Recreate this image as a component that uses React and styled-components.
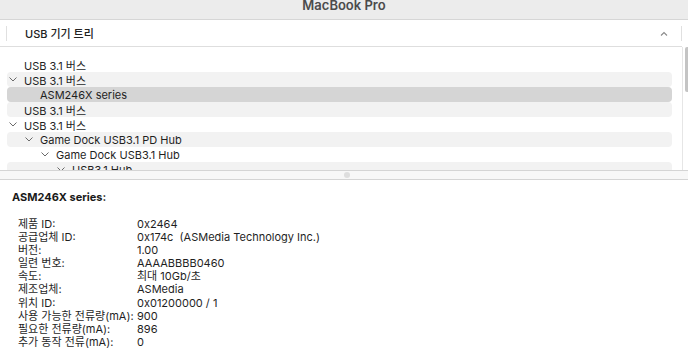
import React from 'react'
import styled, { createGlobalStyle } from 'styled-components'

const Global = createGlobalStyle`
  html, body { margin: 0; padding: 0; background: #fff; }
  body { font-family: Inter, "Noto Sans CJK KR", sans-serif; color: #1f1f1f; }
`

const Window = styled.div`
  width: 688px;
  height: 358px;
  display: flex;
  flex-direction: column;
  overflow: hidden;
  background: #fff;
`

const TitleBar = styled.div`
  height: 19px;
  flex: none;
  background: #ececec;
  border-bottom: 1px solid #d6d6d6;
  display: flex;
  justify-content: center;
  align-items: flex-start;
`

const Title = styled.span`
  font-size: 13px;
  font-weight: 600;
  color: #4b4b4b;
  line-height: 11px;
`

const Header = styled.div`
  height: 26px;
  flex: none;
  display: flex;
  align-items: center;
  border-bottom: 1px solid #dedede;
  margin-right: 6px;
`

const Divider = styled.div`
  width: 1px;
  height: 15px;
  background: #e0e0e0;
  margin-left: ${p => p.$ml || 0}px;
`

const HeaderLabel = styled.span`
  font-size: 11px;
  font-weight: 500;
  color: #222;
  margin-left: 18px;
  flex: 1;
`

const SortIcon = styled.svg`
  width: 8px;
  height: 5px;
  margin-right: 13px;
`

const TreePane = styled.div`
  height: 123px;
  flex: none;
  display: flex;
`

const TreeList = styled.div`
  flex: 1;
  padding-top: 10px;
  overflow: hidden;
`

const Row = styled.div`
  height: 15px;
  margin: 0 10px 0 7px;
  border-radius: 4px;
  background: ${p => (p.$selected ? '#d5d5d5' : p.$striped ? '#f2f2f2' : 'transparent')};
  display: flex;
  align-items: center;
  padding-left: ${p => 2 + p.$depth * 16}px;
  font-size: 11px;
  color: #1f1f1f;
  white-space: nowrap;
`

const Chevron = styled.svg`
  width: 8px;
  height: 5px;
  margin-right: 7px;
  flex: none;
`

const ChevronSpace = styled.span`
  width: 15px;
  flex: none;
`

const Scrollbar = styled.div`
  width: 5px;
  border-left: 1px solid #e6e6e6;
  display: flex;
  justify-content: flex-end;
`

const Thumb = styled.div`
  width: 3px;
  height: 45px;
  background: #c4c4c4;
  border-radius: 2px 0 0 2px;
`

const Splitter = styled.div`
  height: 8px;
  flex: none;
  border-top: 1px solid #d4d4d4;
  border-bottom: 1px solid #d4d4d4;
  background: #f7f7f7;
  display: flex;
  justify-content: center;
  align-items: center;
`

const Dot = styled.div`
  width: 6px;
  height: 6px;
  border-radius: 50%;
  background: #dedede;
  margin-left: 5px;
`

const Detail = styled.div`
  flex: 1;
  padding: 10px 0 0 12px;
`

const DetailTitle = styled.div`
  font-size: 11px;
  font-weight: 700;
  line-height: 14px;
  color: #1a1a1a;
  margin-bottom: 14px;
`

const Props = styled.div`
  display: grid;
  grid-template-columns: 119px 1fr;
  padding-left: 6px;
  font-size: 11px;
  line-height: 13.1px;
  color: #1f1f1f;
`

const Value = styled.span`
  white-space: pre;
`

const tree = [
  { label: 'USB 3.1 버스', depth: 0 },
  { label: 'USB 3.1 버스', depth: 0, open: true },
  { label: 'ASM246X series', depth: 1, selected: true },
  { label: 'USB 3.1 버스', depth: 0 },
  { label: 'USB 3.1 버스', depth: 0, open: true },
  { label: 'Game Dock USB3.1 PD Hub', depth: 1, open: true },
  { label: 'Game Dock USB3.1 Hub', depth: 2, open: true },
  { label: 'USB3.1 Hub', depth: 3, open: true },
]

const props = [
  ['제품 ID:', '0x2464'],
  ['공급업체 ID:', '0x174c  (ASMedia Technology Inc.)'],
  ['버전:', '1.00'],
  ['일련 번호:', 'AAAABBBB0460'],
  ['속도:', '최대 10Gb/초'],
  ['제조업체:', 'ASMedia'],
  ['위치 ID:', '0x01200000 / 1'],
  ['사용 가능한 전류량(mA):', '900'],
  ['필요한 전류량(mA):', '896'],
  ['추가 동작 전류(mA):', '0'],
]

const App = () => {
  return (
    <Window>
      <Global />
      <TitleBar>
        <Title>MacBook Pro</Title>
      </TitleBar>
      <Header>
        <Divider $ml={6} />
        <HeaderLabel>USB 기기 트리</HeaderLabel>
        <SortIcon viewBox="0 0 8 5">
          <polyline points="1,4.5 4,1.5 7,4.5" fill="none" stroke="#8a8a8a" strokeWidth="1.1" />
        </SortIcon>
        <Divider />
      </Header>
      <TreePane>
        <TreeList>
          {tree.map((r, i) => (
            <Row key={i} $depth={r.depth} $striped={i % 2 === 1} $selected={r.selected}>
              {r.open ? (
                <Chevron viewBox="0 0 8 5">
                  <polyline points="0.5,0.5 4,4 7.5,0.5" fill="none" stroke="#6a6a6a" strokeWidth="1" />
                </Chevron>
              ) : (
                <ChevronSpace />
              )}
              {r.label}
            </Row>
          ))}
        </TreeList>
        <Scrollbar>
          <Thumb />
        </Scrollbar>
      </TreePane>
      <Splitter>
        <Dot />
      </Splitter>
      <Detail>
        <DetailTitle>ASM246X series:</DetailTitle>
        <Props>
          {props.map(([k, v]) => (
            <React.Fragment key={k}>
              <span>{k}</span>
              <Value>{v}</Value>
            </React.Fragment>
          ))}
        </Props>
      </Detail>
    </Window>
  )
}

export default App
